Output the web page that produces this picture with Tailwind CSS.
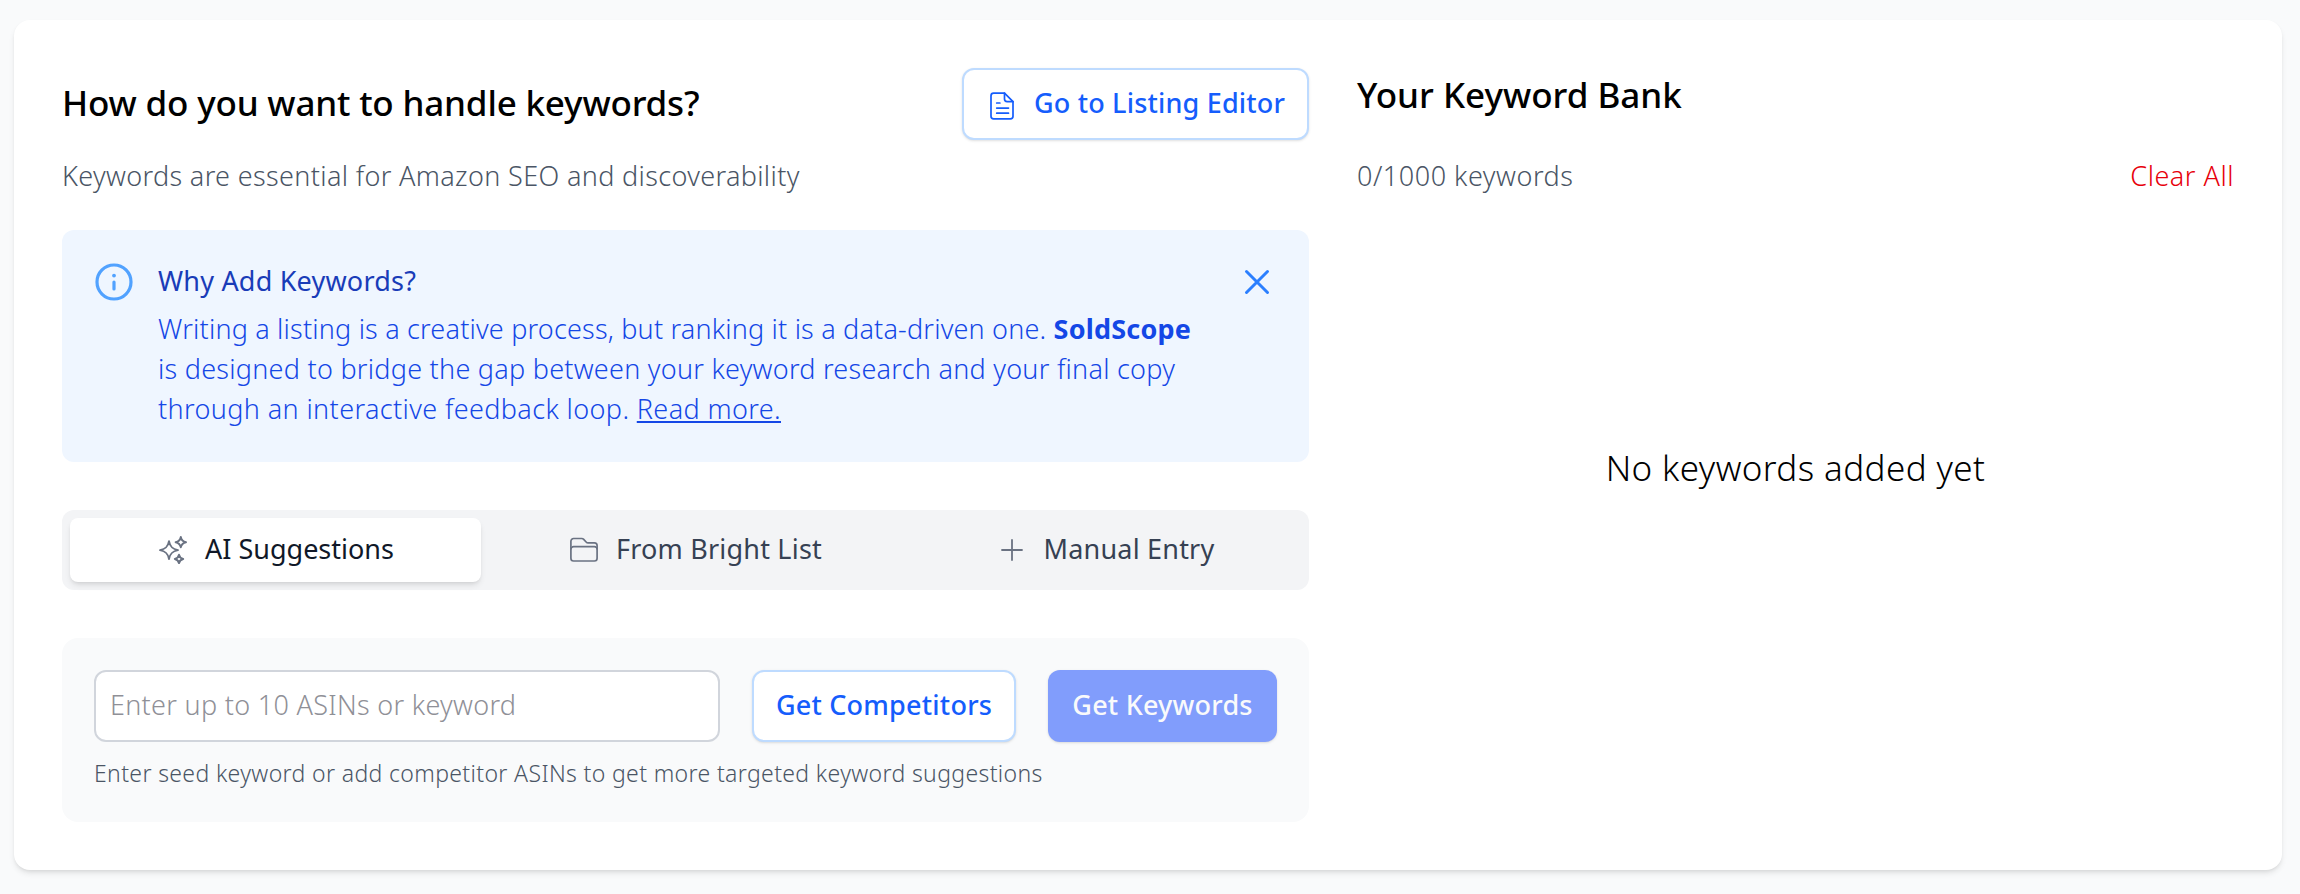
<!DOCTYPE html>
<html lang="en">

<head>
  <meta charset="UTF-8">
  <title>Keywords</title>
  <script src="https://cdn.jsdelivr.net/npm/@tailwindcss/browser@4"></script>
</head>

<body class="bg-gray-50 font-['Noto_Sans',sans-serif] font-light text-[27px] leading-10 text-black">
  <main class="m-5 ml-3.5 mr-[18px] h-[850px] rounded-2xl bg-white p-12 shadow-md flex gap-12">
    <!-- Left column: keyword sources -->
    <section class="w-[1247px] shrink-0">
      <div class="flex justify-between items-center h-[72px]">
        <h2 class="text-[35px] font-medium tracking-[-0.18px] pb-[3px]">How do you want to handle keywords?</h2>
        <button class="flex items-center h-[72px] w-[347px] pl-6 border-2 border-blue-200 rounded-xl shadow-sm bg-white text-[#155dfc] font-medium tracking-[0.18px]">
          <svg class="w-7 h-7 mr-[18px] mt-1" viewBox="0 0 28 28" fill="none" stroke="currentColor" stroke-width="1.7" stroke-linecap="round" stroke-linejoin="round">
            <path d="M16.5 1.2H5.6a2.6 2.6 0 0 0-2.6 2.6v20.4a2.6 2.6 0 0 0 2.6 2.6h16.8a2.6 2.6 0 0 0 2.6-2.6V9.7z" />
            <path d="M16.5 1.2v5.9a2.6 2.6 0 0 0 2.6 2.6H25" />
            <path d="M8.7 11h3.2M8.7 16.1h11.8M8.7 21.2h11.8" />
          </svg>
          <span class="pb-0.5">Go to Listing Editor</span>
        </button>
      </div>
      <p class="mt-4 text-gray-600 tracking-[0.35px]">Keywords are essential for Amazon SEO and discoverability</p>

      <!-- Info alert -->
      <div class="mt-[34px] h-[232px] rounded-xl bg-blue-50 p-8 flex">
        <svg class="w-10 h-10 shrink-0 text-[#51a2ff]" viewBox="0 0 40 40" fill="none" stroke="currentColor" stroke-width="3.2" stroke-linecap="round">
          <circle cx="20" cy="20" r="17" />
          <path d="M20 20v7" />
          <circle cx="20" cy="13.6" r="1.9" fill="currentColor" stroke="none" />
        </svg>
        <div class="ml-6 -mt-px flex-1">
          <h3 class="font-normal text-blue-800 tracking-[0.2px]">Why Add Keywords?</h3>
          <p class="mt-2 text-blue-700 tracking-[0.26px] whitespace-nowrap">
            <span class="tracking-[0.19px]">Writing a listing is a creative process, but ranking it is a data-driven one. <b class="font-bold">SoldScope</b></span><br>
            is designed to bridge the gap between your keyword research and your final copy<br>
            <span class="tracking-[0.38px]">through an interactive feedback loop. <a class="underline decoration-2 underline-offset-2">Read more.</a></span>
          </p>
        </div>
        <svg class="w-10 h-10 shrink-0 text-[#2b7fff]" viewBox="0 0 40 40" fill="none" stroke="currentColor" stroke-width="3" stroke-linecap="round">
          <path d="M9.5 9.5l21 21M30.5 9.5l-21 21" />
        </svg>
      </div>

      <!-- Tabs -->
      <div class="mt-12 h-20 rounded-xl bg-gray-100 p-2 flex font-normal text-gray-700 tracking-[0.2px]">
        <div class="w-[411px] rounded-lg bg-white shadow-md flex items-center justify-center gap-[18px] pl-0.5 text-gray-900 tracking-normal">
          <svg class="w-7 h-7 text-gray-500" viewBox="0 0 28 28" fill="none" stroke="currentColor" stroke-width="1.9" stroke-linejoin="round">
            <path d="M10 5.2c1 5.6 3.4 7.9 9 8.9c-5.6 1-8 3.3-9 8.9c-1-5.6-3.4-7.9-9-8.9c5.6-1 8-3.3 9-8.9z" />
            <path d="M21.8 1c.6 3.2 2 4.6 5.2 5.2c-3.2.6-4.6 2-5.2 5.2c-.6-3.2-2-4.6-5.2-5.2c3.2-.6 4.6-2 5.2-5.2z" />
            <path d="M20 18.8c.5 2.6 1.6 3.7 4.2 4.2c-2.6.5-3.7 1.6-4.2 4.2c-.5-2.6-1.6-3.7-4.2-4.2c2.6-.5 3.7-1.6 4.2-4.2z" />
          </svg>
          <span class="pb-0.5">AI Suggestions</span>
        </div>
        <div class="w-[428px] flex items-center justify-center gap-[18px] pl-0.5">
          <svg class="w-7 h-7 text-gray-500" viewBox="0 0 28 28" fill="none" stroke="currentColor" stroke-width="1.7" stroke-linejoin="round">
            <path d="M.9 22.3V5.2a2.7 2.7 0 0 1 2.7-2.7h8.1a2.7 2.7 0 0 1 2 .9l2.4 2.6a2.7 2.7 0 0 0 2 .9h6.3a2.7 2.7 0 0 1 2.7 2.7v12.7a2.7 2.7 0 0 1-2.7 2.7H3.6a2.7 2.7 0 0 1-2.7-2.7z" />
            <path d="M.9 13.4a2.7 2.7 0 0 1 2.7-2.7h20.8a2.7 2.7 0 0 1 2.7 2.7" />
          </svg>
          <span class="pb-0.5">From Bright List</span>
        </div>
        <div class="w-[392px] flex items-center justify-center gap-[18px] pl-0.5">
          <svg class="w-7 h-7 text-gray-500" viewBox="0 0 28 28" fill="none" stroke="currentColor" stroke-width="1.8" stroke-linecap="round">
            <path d="M14 4v20M4 14h20" />
          </svg>
          <span class="pb-0.5">Manual Entry</span>
        </div>
      </div>

      <!-- Keyword search form -->
      <div class="mt-12 h-[184px] rounded-2xl bg-gray-50 p-8">
        <div class="flex gap-8 h-[72px] font-medium tracking-[0.22px]">
          <input type="text" placeholder="Enter up to 10 ASINs or keyword"
            class="w-[626px] border-2 border-gray-300 rounded-xl bg-white px-3.5 pb-0.5 font-light tracking-[0.3px] placeholder:text-[#8f9097]">
          <button class="w-[264px] border-2 border-blue-200 rounded-xl shadow-sm bg-white pb-0.5 text-[#155dfc]">Get Competitors</button>
          <button class="w-[229px] rounded-xl shadow-sm bg-[#819dfc] pb-0.5 text-gray-50">Get Keywords</button>
        </div>
        <p class="mt-[15px] text-[23px] leading-8 tracking-[0.36px] text-gray-600">Enter seed keyword or add competitor ASINs to get more targeted keyword suggestions</p>
      </div>
    </section>

    <!-- Right column: keyword bank -->
    <section class="w-[877px] flex flex-col">
      <h2 class="h-14 pt-1 text-[35px] leading-[46px] font-medium">Your Keyword Bank</h2>
      <div class="mt-8 flex justify-between">
        <span class="text-gray-600 tracking-[0.52px]">0/1000 keywords</span>
        <button class="text-[#e7000b] tracking-[0.5px]">Clear All</button>
      </div>
      <div class="mt-[252px] text-center text-[35px] tracking-[0.4px]">No keywords added yet</div>
    </section>
  </main>
</body>

</html>
